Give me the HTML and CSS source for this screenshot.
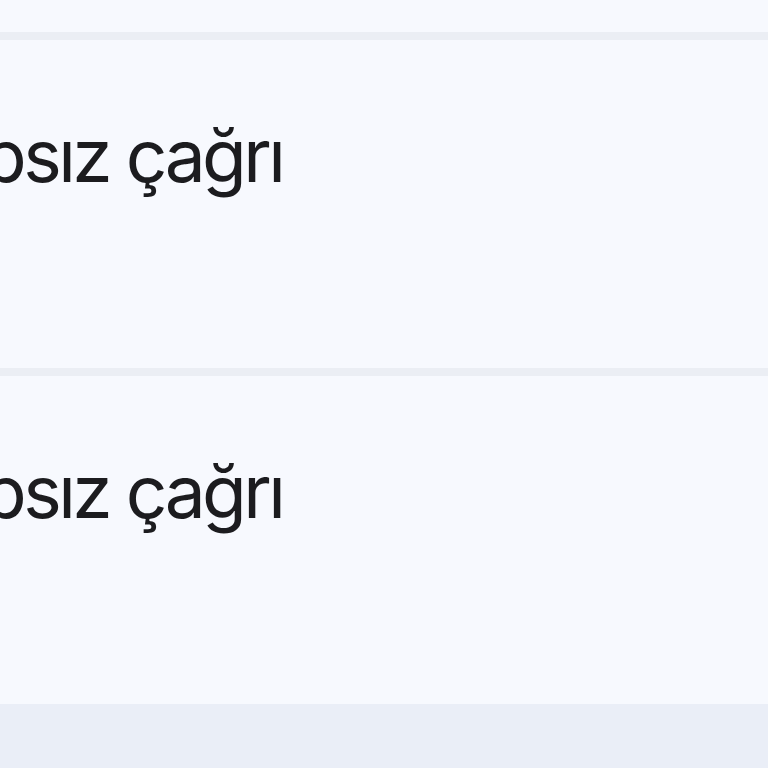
FILE: index.html
```html
<!DOCTYPE html>
<html lang="tr">
<head>
<meta charset="utf-8">
<link rel="stylesheet" href="styles.css">
</head>
<body>
<div class="screen">
  <div class="top"></div>
  <div class="sep"></div>
  <div class="row"><div class="label">cevapsız çağrı</div></div>
  <div class="sep"></div>
  <div class="row"><div class="label">cevapsız çağrı</div></div>
  <div class="bottom"></div>
</div>
</body>
</html>
```
FILE: styles.css
```css
html, body { margin: 0; padding: 0; }
body { background: #eaeef7; overflow: hidden; }
.screen { width: 768px; height: 768px; display: flex; flex-direction: column; overflow: hidden; }
.top { height: 32px; background: #f7f9fe; }
.sep { height: 8px; background: #ebeef4; }
.row { height: 328px; background: #f7f9fe; box-sizing: border-box; padding-top: 80px; overflow: hidden; }
.label { font-family: Inter, "Noto Sans", sans-serif; font-size: 73px; line-height: 72px; color: #1c1c1f; margin-left: -168px; white-space: nowrap; letter-spacing: -3.6px; }
.bottom { flex: 1; background: #eaeef7; }
```
